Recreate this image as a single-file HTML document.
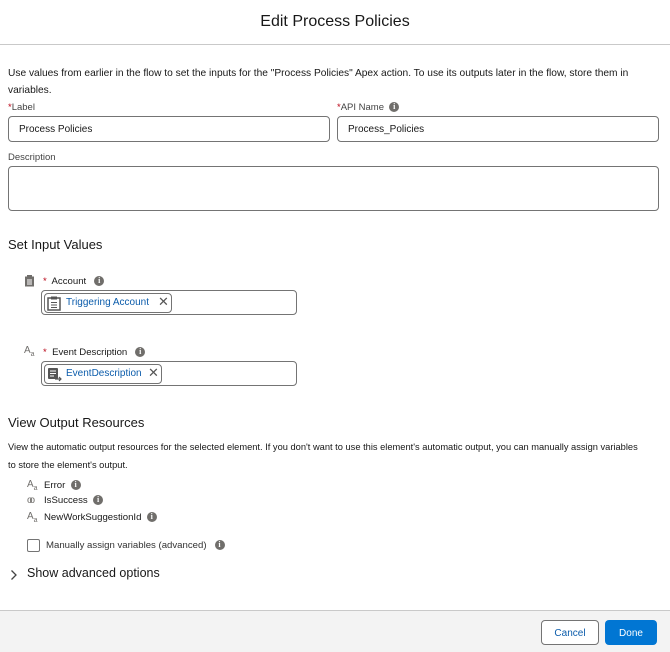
<!DOCTYPE html>
<html><head><style>
*{box-sizing:border-box;margin:0;padding:0}
body{width:670px;height:652px;background:#fff;font-family:"Liberation Sans",sans-serif;color:#181818;position:relative;overflow:hidden;font-size:10px}
.a{position:absolute;white-space:nowrap}
.inp{position:absolute;border:1px solid #747474;border-radius:4px;background:#fff}
.req{color:#ba0517}
.info{display:inline-block;width:10px;height:10px;border-radius:50%;background:#706e6b;color:#fff;font-size:8px;font-weight:bold;text-align:center;line-height:10px;font-family:"Liberation Serif",serif;vertical-align:middle}
.pill{position:absolute;border:1px solid #747474;border-radius:4px;height:20px;color:#0b5cab;font-size:10px;line-height:18px}
.x{position:absolute;color:#555;font-size:13px;top:-1px}
.aa{color:#706e6b;font-size:10px}
</style></head><body>
<div class="a" style="left:0;width:670px;top:13px;text-align:center;font-size:16px;">Edit Process Policies</div>
<div class="a" style="left:0;top:44px;width:670px;height:1px;background:#c9c9c9"></div>
<div class="a" style="left:8px;top:65px;font-size:10.2px;line-height:17px;white-space:normal;width:645px">Use values from earlier in the flow to set the inputs for the "Process Policies" Apex action. To use its outputs later in the flow, store them in variables.</div>
<div class="a" style="left:8px;top:102px;font-size:9.5px;color:#444"><span class="req">*</span>Label</div>
<div class="a" style="left:337px;top:102px;font-size:9.5px;color:#444"><span class="req">*</span>API Name &nbsp;<span class="info">i</span></div>
<div class="inp" style="left:8px;top:116px;width:322px;height:26px"><span class="a" style="left:10px;top:7px;font-size:10px">Process Policies</span></div>
<div class="inp" style="left:337px;top:116px;width:322px;height:26px"><span class="a" style="left:10px;top:7px;font-size:10px">Process_Policies</span></div>
<div class="a" style="left:8px;top:152px;font-size:9.5px;color:#444">Description</div>
<div class="inp" style="left:8px;top:166px;width:651px;height:45px"></div>
<div class="a" style="left:8px;top:237px;font-size:13px">Set Input Values</div>
<svg class="a" style="left:24px;top:275px" width="11" height="12"><rect x="1" y="1.5" width="9" height="10" fill="#706e6b"/><rect x="3" y="0" width="5" height="3" fill="#706e6b"/><path d="M3 5h5M3 7h5M3 9h5" stroke="#fff" stroke-width="1"/></svg>
<div class="a" style="left:43px;top:276px;font-size:9.6px"><span class="req">*</span>&nbsp; Account &nbsp; <span class="info">i</span></div>
<div class="inp" style="left:41px;top:290px;width:256px;height:25px"></div>
<div class="pill" style="left:44px;top:293px;width:128px"><svg class="a" style="left:2px;top:2px" width="14" height="15"><rect x="1" y="2" width="12" height="12" fill="none" stroke="#555" stroke-width="1.5"/><rect x="4" y="0.5" width="6" height="3" fill="#555"/><path d="M4 6.5h6M4 9h6M4 11.5h6" stroke="#555"/></svg><span class="a" style="left:21px;top:0">Triggering Account</span><span class="x" style="left:113px">✕</span></div>
<div class="a aa" style="left:24px;top:345px">A<sub style="font-size:7px">a</sub></div>
<div class="a" style="left:43px;top:347px;font-size:9.6px"><span class="req">*</span>&nbsp; Event Description &nbsp; <span class="info">i</span></div>
<div class="inp" style="left:41px;top:361px;width:256px;height:25px"></div>
<div class="pill" style="left:44px;top:364px;width:118px"><svg class="a" style="left:2px;top:2px" width="15" height="15"><rect x="1" y="1" width="10" height="11" rx="1" fill="#555"/><path d="M3 4h6M3 6.5h6M3 9h4" stroke="#fff"/><path d="M8 12h6M12 10l2 2-2 2" stroke="#555" fill="none" stroke-width="1.2"/></svg><span class="a" style="left:21px;top:0">EventDescription</span><span class="x" style="left:103px">✕</span></div>
<div class="a" style="left:8px;top:415px;font-size:13px">View Output Resources</div>
<div class="a" style="left:8px;top:438px;font-size:9.3px;line-height:18px;white-space:normal;width:636px">View the automatic output resources for the selected element. If you don't want to use this element's automatic output, you can manually assign variables to store the element's output.</div>
<div class="a aa" style="left:27px;top:479px">A<sub style="font-size:7px">a</sub></div>
<div class="a" style="left:44px;top:480px;font-size:9.6px">Error &nbsp;<span class="info">i</span></div>
<div class="a" style="left:27px;top:495px;font-size:10px;color:#706e6b;letter-spacing:-3px">oo</div>
<div class="a" style="left:44px;top:495px;font-size:9.6px">IsSuccess &nbsp;<span class="info">i</span></div>
<div class="a aa" style="left:27px;top:511px">A<sub style="font-size:7px">a</sub></div>
<div class="a" style="left:44px;top:512px;font-size:9.6px">NewWorkSuggestionId &nbsp;<span class="info">i</span></div>
<div class="a" style="left:27px;top:539px;width:13px;height:13px;border:1px solid #747474;border-radius:2px"></div>
<div class="a" style="left:46px;top:540px;font-size:9.6px;color:#333">Manually assign variables (advanced) &nbsp;&nbsp;<span class="info">i</span></div>
<svg class="a" style="left:10px;top:569px" width="8" height="12"><path d="M1.5 1.5l4.5 4.5-4.5 4.5" stroke="#444" stroke-width="1.3" fill="none"/></svg>
<div class="a" style="left:27px;top:566px;font-size:12.5px">Show advanced options</div>
<div class="a" style="left:0;top:610px;width:670px;height:42px;background:#f3f3f3;border-top:1px solid #c9c9c9"></div>
<div class="a" style="left:541px;top:620px;width:58px;height:25px;border:1px solid #747474;border-radius:4px;background:#fff;color:#0b5cab;font-size:10px;text-align:center;line-height:25px">Cancel</div>
<div class="a" style="left:605px;top:620px;width:52px;height:25px;border-radius:4px;background:#0176d3;color:#fff;font-size:10px;text-align:center;line-height:27px">Done</div>
</body></html>
